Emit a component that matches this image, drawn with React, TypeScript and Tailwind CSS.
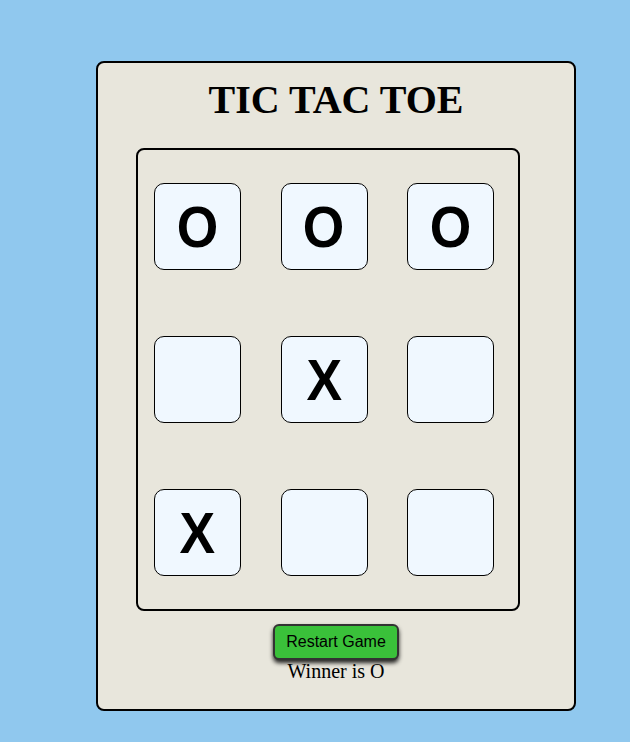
import React from "react";

const board = ["O", "O", "O", "", "X", "", "X", "", ""];

export default function App() {
  return (
    <div className="min-h-[742px] bg-[#90c8ee] pt-[61px] pl-[96px]">
      <div className="flex h-[650px] w-[480px] flex-col items-center rounded-[8px] border-2 border-black bg-[#e8e6dc]">
        <h1
          className="mt-[14px] text-[40px] font-bold leading-[46px] text-black"
          style={{ fontFamily: '"Liberation Serif", "Times New Roman", serif' }}
        >
          TIC TAC TOE
        </h1>
        <div className="mt-[25px] ml-[38px] h-[463px] w-[384px] self-start rounded-[8px] border-2 border-black pt-[33px] pl-[16px]">
          <div className="grid grid-cols-[87px_87px_87px] grid-rows-[87px_87px_87px] gap-x-[39.5px] gap-y-[66px]">
            {board.map((v, i) => (
              <div
                key={i}
                className="flex h-[87px] w-[87px] items-center justify-center rounded-[10px] border border-black bg-[#f0f8ff] text-[58px] leading-none font-bold text-black"
                style={{ fontFamily: '"Liberation Sans", Arial, sans-serif' }}
              >
                <span className="inline-block scale-x-[0.92]">{v}</span>
              </div>
            ))}
          </div>
        </div>
        <button
          className="mt-[13px] h-[36px] w-[126px] rounded-[6px] border-2 border-[#333] bg-[#3ac13a] text-[16px] text-black shadow-[0_3px_4px_rgba(0,0,0,0.85)]"
          style={{ fontFamily: '"Liberation Sans", Arial, sans-serif' }}
        >
          Restart Game
        </button>
        <p
          className="text-[20px] leading-[23px] text-black"
          style={{ fontFamily: '"Liberation Serif", "Times New Roman", serif' }}
        >
          Winner is O
        </p>
      </div>
    </div>
  );
}
